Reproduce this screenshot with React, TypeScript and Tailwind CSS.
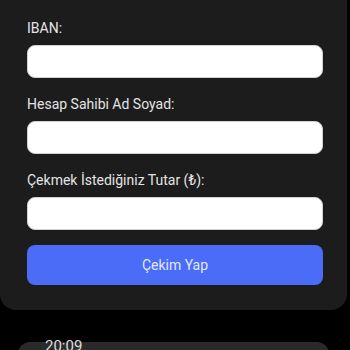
export default function App() {
  return (
    <div className="min-h-[350px] h-[350px] overflow-hidden bg-black font-['Roboto',sans-serif]">
      {/* Withdraw form */}
      <div className="w-[347px] rounded-b-[16px] bg-[#1c1c1c] pl-[27px] pr-[24px] pt-[18px] pb-[25px]">
        <label className="block text-[14px] leading-[20px] text-[#e4e4e4] mb-[7px]">IBAN:</label>
        <input className="block w-[296px] h-[33px] rounded-[8px] bg-white border border-[#d0d0d0] mb-[16px] outline-none" />

        <label className="block text-[14px] leading-[20px] text-[#e4e4e4] mb-[7px]">Hesap Sahibi Ad Soyad:</label>
        <input className="block w-[296px] h-[33px] rounded-[8px] bg-white border border-[#d0d0d0] mb-[16px] outline-none" />

        <label className="block text-[14px] leading-[20px] text-[#e4e4e4] mb-[7px]">Çekmek İstediğiniz Tutar (₺):</label>
        <input className="block w-[296px] h-[33px] rounded-[8px] bg-white border border-[#d0d0d0] mb-[15px] outline-none" />

        <button className="block w-[296px] h-[40px] rounded-[8px] bg-[#4a6cf7] text-[14px] text-[#e3e8ff]">
          Çekim Yap
        </button>
      </div>

      {/* History */}
      <div className="mt-[32px] ml-[18px] w-[311px] h-[40px] rounded-[12px] bg-[#2a2a2a] pl-[27px]">
        <span className="relative -top-[5px] block text-[15px] leading-[18px] text-[#dedede]">20:09</span>
      </div>
    </div>
  );
}
